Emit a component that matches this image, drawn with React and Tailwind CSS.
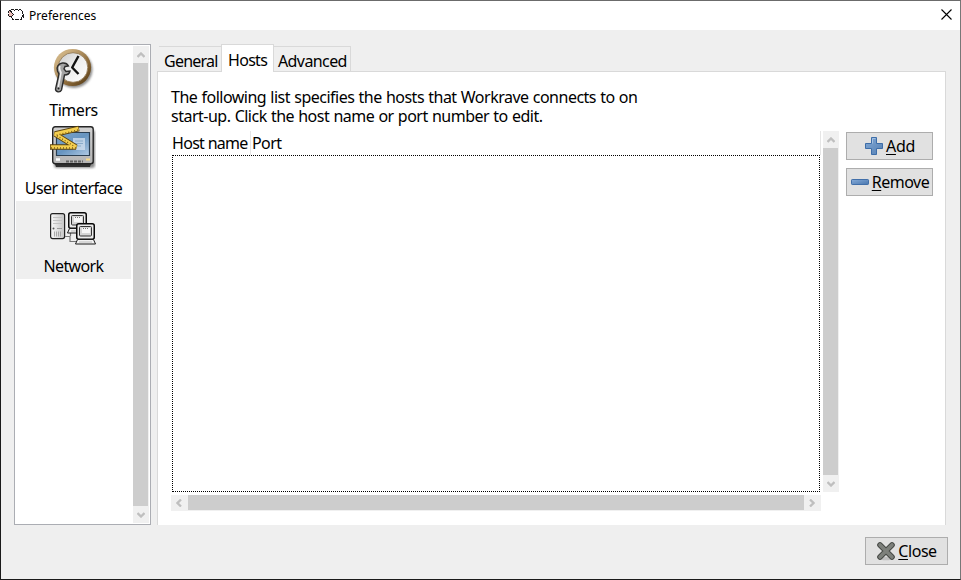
import React from 'react';

const ARROWS = {
  up: 'M.5 5 L4 1.500 L7.500 5',
  down: 'M.5 1 L4 4.500 L7.500 1',
  left: 'M5 .5 L1.500 4 L5 7.500',
  right: 'M1 .5 L4.500 4 L1 7.500',
};

function Arrow({ dir }) {
  const vertical = dir === 'up' || dir === 'down';
  return (
    <svg
      width={vertical ? 8 : 6}
      height={vertical ? 6 : 8}
      viewBox={vertical ? '0 0 8 6' : '0 0 6 8'}
      fill="none"
      stroke="#bfbfbf"
      strokeWidth="2.300"
    >
      <path d={ARROWS[dir]} />
    </svg>
  );
}

function VScroll() {
  return (
    <div className="flex h-full w-4 shrink-0 flex-col bg-[#f0f0f0]">
      <div className="flex h-[17px] shrink-0 items-center justify-center pr-px"><Arrow dir="up" /></div>
      <div className="mr-px flex-1 bg-[#cdcdcd]" />
      <div className="flex h-[17px] shrink-0 items-center justify-center pr-px"><Arrow dir="down" /></div>
    </div>
  );
}

function HScroll() {
  return (
    <div className="flex h-4 w-[650px] bg-[#f0f0f0]">
      <div className="flex w-[17px] items-center justify-center pr-px"><Arrow dir="left" /></div>
      <div className="mb-px flex-1 bg-[#cdcdcd]" />
      <div className="flex w-[17px] items-center justify-center pr-px"><Arrow dir="right" /></div>
    </div>
  );
}

const SHEEP = [
  '...###.###.##...',
  '.##www#www#ww#..',
  '#o##wwwwwwwwww#.',
  '#oo#wwwwwwwwww#.',
  '.ooo#wwwwwwwww#.',
  '#oooo#wwwwwwwww#',
  '#ooo#wwwwwwwww##',
  '.###wwwwwwwwww##',
  '...#wwwwwwwww#.#',
  '....#wwwwwwww#..',
  '....##.####.##..',
];
const INK = { '#': '#1c1c1c', o: '#ecbdb8', w: '#ffffff' };

function SheepIcon() {
  return (
    <svg width="16" height="11" viewBox="0 0 16 11" shapeRendering="crispEdges" className="-mt-[3px]">
      {SHEEP.flatMap((row, y) =>
        [...row].map((c, x) =>
          INK[c] ? <rect key={`${x}-${y}`} x={x} y={y} width="1" height="1" fill={INK[c]} /> : null,
        ),
      )}
    </svg>
  );
}

function TimersIcon() {
  return (
    <svg width="48" height="48" viewBox="0 1 48 48">
      <defs>
        <linearGradient id="rim" x1="0" y1="0" x2="1" y2="1">
          <stop offset="0" stopColor="#d9bf90" />
          <stop offset=".25" stopColor="#c8ab7c" />
          <stop offset=".65" stopColor="#886636" />
          <stop offset="1" stopColor="#4b3310" />
        </linearGradient>
        <linearGradient id="dial" x1="0" y1="0" x2="1" y2="1">
          <stop offset="0" stopColor="#c9c9c9" />
          <stop offset=".5" stopColor="#efefef" />
          <stop offset="1" stopColor="#fff" />
        </linearGradient>
        <filter id="soft" x="-20%" y="-20%" width="140%" height="140%"><feGaussianBlur stdDeviation="1.3" /></filter>
      </defs>
      <circle cx="26" cy="23.500" r="18.500" fill="#555" opacity=".65" filter="url(#soft)" />
      <circle cx="24.500" cy="21.500" r="18.600" fill="url(#rim)" />
      <circle cx="25" cy="21.500" r="14.800" fill="url(#dial)" stroke="#8d744e" strokeWidth=".8" />
      <path d="M30.500 10 24.200 21.500 30.500 28" fill="none" stroke="#111" strokeWidth="2.400" strokeLinejoin="round" />
      <path
        d="M14.500 17c-4 .5-6.500 4-5 8l1.500 3-3.500 15c0 3 4.500 4 6 1l3-15c3 0 5-1.500 5.500-4l-4 .5-2-2.500 1-2.500 3.500-.5c-1-2-3-3.300-6-3z"
        fill="#a4a4a4"
        stroke="#2c2c2c"
        strokeWidth="1.400"
      />
      <path d="M12 20c-1 2-.5 4 1 6.500L10.300 41" fill="none" stroke="#efefef" strokeWidth="1.500" />
      <circle cx="10.500" cy="42.500" r="1" fill="#222" />
    </svg>
  );
}

function InterfaceIcon() {
  return (
    <svg width="48" height="48" viewBox="-1 0 48 48">
      <defs>
        <linearGradient id="screen" x1="0" y1="0" x2="1" y2="1">
          <stop offset="0" stopColor="#7fa6ca" />
          <stop offset=".5" stopColor="#6694c0" />
          <stop offset="1" stopColor="#b2cbe4" />
        </linearGradient>
        <linearGradient id="shell" x1="0" y1="0" x2="0" y2="1">
          <stop offset="0" stopColor="#d2d2d2" />
          <stop offset="1" stopColor="#b4b4b4" />
        </linearGradient>
        <filter id="soft2" x="-20%" y="-20%" width="140%" height="140%"><feGaussianBlur stdDeviation="1" /></filter>
      </defs>
      <rect x="5" y="5" width="41" height="38" rx="3" fill="#444" opacity=".6" filter="url(#soft2)" />
      <path d="M5 36h38l-2 6H7z" fill="#303030" />
      <rect x="3.700" y="1.700" width="40.500" height="37" rx="2.500" fill="url(#shell)" stroke="#252525" strokeWidth="1.400" />
      <path d="M7.500 30.500V7.500h33v23z" fill="url(#screen)" stroke="#2b3f52" strokeWidth="1.200" />
      <path d="M24 13h12v12H24z" fill="#d4e2f0" opacity=".75" />
      <path d="M26 16h8M26 18.500h8M26 21h6" stroke="#8aabc9" />
      <path d="M7 34.500h4" stroke="#fff" strokeWidth="2.500" />
      <path d="M17 36.500h17" stroke="#636363" strokeWidth="2" strokeDasharray="3 1" />
      <path d="M37 34.500h4" stroke="#f4d788" strokeWidth="2" />
      <path d="M30 3.500 6 9l21 13H1" fill="none" stroke="#5d430c" strokeWidth="5.500" strokeLinejoin="bevel" />
      <path d="M29.500 3.600 6 9l21 13H1.700" fill="none" stroke="#f4cf50" strokeWidth="3.700" strokeLinejoin="bevel" />
      <path d="M29 5 7 10.200M8 10.800l18 11M27 23H2" fill="none" stroke="#7b5c14" strokeWidth="1.300" strokeDasharray="1 2" />
    </svg>
  );
}

function Terminal({ x, y }) {
  return (
    <g transform={`translate(${x} ${y})`}>
      <rect x=".75" y=".75" width="17.500" height="15.500" rx="2" fill="#ececec" stroke="#080808" strokeWidth="1.500" />
      <rect x="3.500" y="3.500" width="12" height="9.500" rx="1" fill="#d6d6d6" stroke="#333" />
      <path d="M6 5h8v5H6z" fill="#f7f7f7" />
      <path d="M7 5.500h6" stroke="#777" strokeDasharray="1 1" />
      <path d="M1.500 16.500h16l2 4.500h-20z" fill="#f2f2f2" stroke="#1a1a1a" />
      <path d="M3 19h13" stroke="#bcbcbc" />
    </g>
  );
}

function NetworkIcon() {
  return (
    <svg width="48" height="48" viewBox="0 0 48 48">
      <defs>
        <linearGradient id="tower" x1="0" y1="0" x2="1" y2="0">
          <stop offset="0" stopColor="#fafafa" />
          <stop offset="1" stopColor="#c4c4c4" />
        </linearGradient>
      </defs>
      <rect x="2.600" y="10.600" width="14" height="25" rx="2" fill="url(#tower)" stroke="#222" strokeWidth="1.200" />
      <path d="M5 14.500h9M5 17.500h9M5 20.500h9" stroke="#c2c2c2" />
      <circle cx="5.500" cy="25.500" r="1" fill="#555" />
      <path d="M9 25.500h5" stroke="#999" />
      <path d="M6.500 28.500v5M8.500 28.500v5M10.500 28.500v5M12.500 28.500v5" stroke="#999" strokeWidth=".8" />
      <path d="M17 33.500h5v5h7M22.500 33v-5" fill="none" stroke="#777" strokeWidth="1.200" />
      <Terminal x={20} y={9} />
      <Terminal x={28} y={20} />
    </svg>
  );
}

function AddIcon() {
  return (
    <svg width="20" height="20" viewBox="0 0 20 20">
      <defs>
        <linearGradient id="plus" x1="0" y1="0" x2="1" y2="1">
          <stop offset="0" stopColor="#83a9d5" />
          <stop offset="1" stopColor="#5580b4" />
        </linearGradient>
      </defs>
      <path d="M7.500 1.500h5v6h6v5h-6v6h-5v-6h-6v-5h6z" fill="url(#plus)" stroke="#3d6da8" strokeLinejoin="round" />
      <path d="M8.500 7.500v-5h3" fill="none" stroke="#a4c0e1" />
    </svg>
  );
}

function RemoveIcon() {
  return (
    <svg width="20" height="20" viewBox="0 0 20 20">
      <defs>
        <linearGradient id="minus" x1="0" y1="0" x2="1" y2="1">
          <stop offset="0" stopColor="#86abd8" />
          <stop offset="1" stopColor="#4876ae" />
        </linearGradient>
      </defs>
      <rect x="1.500" y="7.500" width="17" height="5" rx=".7" fill="url(#minus)" stroke="#416fa9" />
    </svg>
  );
}

function CloseIcon() {
  return (
    <svg width="20" height="20" viewBox="0 0 20 20">
      <ellipse cx="10" cy="17.500" rx="7" ry="1.700" fill="#aaa" opacity=".6" />
      <path d="M4 4l12 12M16 4 4 16" stroke="#454844" strokeWidth="5.600" strokeLinecap="round" />
      <path d="M4 4l12 12M16 4 4 16" stroke="#7d807b" strokeWidth="3.600" strokeLinecap="round" />
    </svg>
  );
}

function Category({ icon, label, selected, tracking }) {
  return (
    <div className={`flex h-[78px] w-[115px] flex-col items-center pt-[2px] ${selected ? 'bg-[#efefef]' : ''}`}>
      <div className="mr-[3px]">{icon}</div>
      <span className={`mt-[5px] leading-[20px] whitespace-nowrap ${tracking}`}>{label}</span>
    </div>
  );
}

function Button({ icon, mnemonic, rest, className, tracking }) {
  return (
    <button className={`flex h-7 items-center justify-center border border-[#adadad] bg-[#e1e1e1] ${className}`}>
      {icon}
      <span className={`ml-[2px] leading-[20px] whitespace-nowrap ${tracking}`}>
        <span className="underline decoration-1 underline-offset-2">{mnemonic}</span>
        {rest}
      </span>
    </button>
  );
}

export default function App() {
  return (
    <div className="flex h-[580px] w-[961px] flex-col overflow-hidden border border-t-[#6b6b6b] border-r-[#777] border-b-[#1a1a1a] border-l-[#1a1a1a] bg-[#efefef] font-['Noto_Sans',sans-serif] text-[16px] text-black">
      <header className="flex h-[29px] shrink-0 items-center bg-white pr-[8px] pl-[7px]">
        <SheepIcon />
        <span className="ml-[5px] text-[12px] leading-[16px] tracking-[0.05px]">Preferences</span>
        <svg className="-mt-[2px] ml-auto" width="11" height="11" viewBox="0 0 11 11" stroke="#000" strokeWidth="1.100">
          <path d="M.5.5l10 10M10.500.5l-10 10" />
        </svg>
      </header>

      <div className="flex h-[495px] shrink-0 pt-[14px] pl-[13px]">
        <aside className="flex w-[137px] shrink-0 border border-[#abadb3] bg-white pl-px">
          <div className="w-[117px]">
            <Category icon={<TimersIcon />} label="Timers" tracking="tracking-[-0.45px]" />
            <Category icon={<InterfaceIcon />} label="User interface" tracking="tracking-[-0.6px]" />
            <Category icon={<NetworkIcon />} label="Network" tracking="tracking-[-0.65px]" selected />
          </div>
          <div className="h-full pt-px pb-px"><VScroll /></div>
        </aside>

        <section className="ml-[6px] flex w-[789px] flex-col">
          <nav className="z-10 -mb-px flex h-[28px] items-end pl-[2px]">
            <div className="mb-px flex h-[25px] w-[62px] items-center border-t border-[#d9d9d9] pt-[3px] pl-[5px] tracking-[-0.75px]">General</div>
            <div className="flex h-[28px] w-[53px] items-center border border-b-0 border-[#d9d9d9] bg-white pt-[3px] pl-[6px] tracking-[-0.7px]">Hosts</div>
            <div className="mb-px flex h-[25px] w-[77px] items-center border-t border-r border-[#d9d9d9] pt-[3px] pl-[4px] tracking-[-0.6px]">Advanced</div>
          </nav>

          <main className="flex flex-1 border border-b-0 border-[#d9d9d9] bg-white pl-[13px]">
            <div className="w-[675px]">
              <p className="h-[59px] pt-[16px] leading-[19px] tracking-[-0.5px] whitespace-nowrap [word-spacing:0.5px]">
                The following list specifies the hosts that Workrave connects to on<br />
                start-up. Click the host name or port number to edit.
              </p>
              <div className="flex h-[361px]">
                <div className="flex w-[652px] flex-col">
                  <div className="flex h-[24px] w-[650px] items-center border-r border-[#e5e5e5] leading-[20px]">
                    <div className="flex h-full w-[80px] items-center border-r border-[#e5e5e5] pl-px tracking-[-0.7px] whitespace-nowrap">Host name</div>
                    <div className="pl-px tracking-[-0.6px]">Port</div>
                  </div>
                  <div className="ml-px w-[648px] flex-1 border border-dotted border-black" />
                </div>
                <VScroll />
              </div>
              <div className="pt-[3px]"><HScroll /></div>
            </div>
            <div className="flex flex-col gap-2 pt-[60px]">
              <Button icon={<AddIcon />} mnemonic="A" rest="dd" className="w-[87px]" tracking="tracking-[-0.3px]" />
              <Button icon={<RemoveIcon />} mnemonic="R" rest="emove" className="w-[87px]" tracking="tracking-[-0.5px]" />
            </div>
          </main>
        </section>
      </div>

      <footer className="flex justify-end pt-[12px] pr-[12px]">
        <Button icon={<CloseIcon />} mnemonic="C" rest="lose" className="w-[83px]" tracking="tracking-[-0.45px]" />
      </footer>
    </div>
  );
}
